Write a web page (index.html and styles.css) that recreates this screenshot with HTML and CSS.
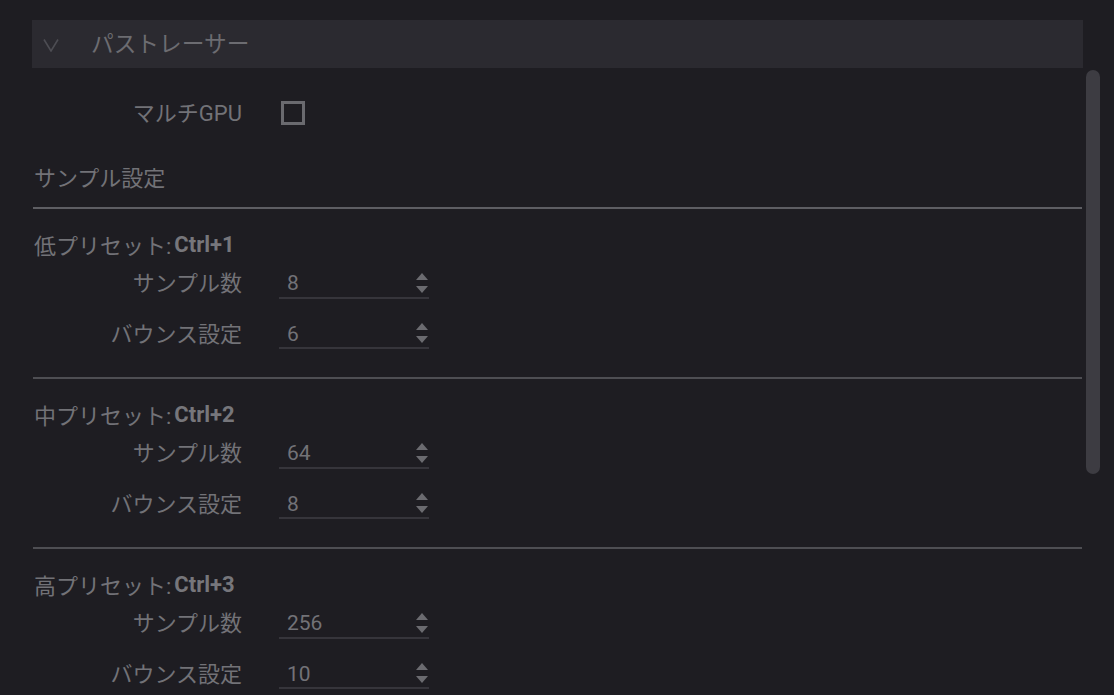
FILE: index.html
```html
<!DOCTYPE html>
<html lang="ja">
<head>
<meta charset="utf-8">
<link rel="stylesheet" href="styles.css">
</head>
<body>
<div class="panel">
  <div class="header">
    <svg class="chevron" width="16" height="14" viewBox="0 0 16 14"><polyline points="1,1.5 8,13 15,1.5" fill="none" stroke="#4d4d53" stroke-width="1.6"/></svg>
    <span class="title">パストレーサー</span>
  </div>
  <div class="content">
    <div class="row">
      <div class="label">マルチGPU</div>
      <div class="checkbox"></div>
    </div>
    <div class="heading">サンプル設定</div>
    <div class="divider"></div>

    <div class="preset">低プリセット:<b>Ctrl+1</b></div>
    <div class="row">
      <div class="label">サンプル数</div>
      <div class="num"><span class="val">8</span><span class="spin"><i class="up"></i><i class="down"></i></span></div>
    </div>
    <div class="row">
      <div class="label">バウンス設定</div>
      <div class="num"><span class="val">6</span><span class="spin"><i class="up"></i><i class="down"></i></span></div>
    </div>
    <div class="divider sec"></div>

    <div class="preset">中プリセット:<b>Ctrl+2</b></div>
    <div class="row">
      <div class="label">サンプル数</div>
      <div class="num"><span class="val">64</span><span class="spin"><i class="up"></i><i class="down"></i></span></div>
    </div>
    <div class="row">
      <div class="label">バウンス設定</div>
      <div class="num"><span class="val">8</span><span class="spin"><i class="up"></i><i class="down"></i></span></div>
    </div>
    <div class="divider sec"></div>

    <div class="preset">高プリセット:<b>Ctrl+3</b></div>
    <div class="row">
      <div class="label">サンプル数</div>
      <div class="num"><span class="val">256</span><span class="spin"><i class="up"></i><i class="down"></i></span></div>
    </div>
    <div class="row">
      <div class="label">バウンス設定</div>
      <div class="num"><span class="val">10</span><span class="spin"><i class="up"></i><i class="down"></i></span></div>
    </div>
    <div class="divider sec"></div>
  </div>
  <div class="scrollbar"></div>
</div>
</body>
</html>
```

FILE: styles.css
```css
html, body {
  margin: 0;
  padding: 0;
  background: #1e1d22;
  overflow: hidden;
  height: 695px;
}
body {
  font-family: Roboto, "Noto Sans CJK JP", sans-serif;
  font-size: 22px;
  color: #727277;
}
.panel {
  position: relative;
  padding: 20px 31px 0 32px;
}
.header {
  height: 48px;
  background: #2b2a30;
  display: flex;
  align-items: center;
}
.chevron {
  margin-left: 11px;
  margin-top: 2px;
}
.title {
  margin-left: 32px;
  color: #6c6c71;
  font-size: 22.7px;
  line-height: 1;
  margin-top: 2px;
}
.content {
  padding: 20px 0 0 2px;
}
.row {
  height: 50.5px;
  display: flex;
  align-items: center;
}
.row:first-child {
  height: 50px;
}
.label {
  width: 208px;
  text-align: right;
  flex: none;
  line-height: 1;
  margin-top: 2px;
}
.checkbox {
  margin-left: 39px;
  width: 18px;
  height: 18px;
  border: 3px solid #6a6a6f;
}
.heading {
  margin-top: 18px;
  height: 40px;
  display: flex;
  align-items: center;
}
.divider {
  margin-top: 11px;
  height: 2px;
  background: #5e5e63;
  margin-right: 1px;
  margin-left: -1px;
}
.divider.sec {
  margin-top: 18px;
  background: #4e4e53;
}
.preset {
  margin-top: 21px;
  height: 28px;
  display: flex;
  align-items: center;
  white-space: pre;
}
.preset b {
  font-weight: 700;
  color: #76767b;
  margin-left: 3px;
}
.num {
  margin-left: 37px;
  width: 150px;
  height: 30px;
  margin-top: 1px;
  border-bottom: 2px solid #36353b;
  display: flex;
  align-items: center;
  justify-content: space-between;
  box-sizing: border-box;
  font-size: 21px;
}
.val {
  margin-left: 8px;
  line-height: 1;
  margin-top: 2px;
}
.spin {
  display: flex;
  flex-direction: column;
  gap: 6px;
  margin-right: 1px;
}
.spin i {
  display: block;
  width: 0;
  height: 0;
  border-left: 6px solid transparent;
  border-right: 6px solid transparent;
}
.spin .up {
  border-bottom: 7px solid #6b6b70;
}
.spin .down {
  border-top: 7px solid #6b6b70;
}
.scrollbar {
  position: absolute;
  left: 1086px;
  top: 70px;
  width: 14px;
  height: 404px;
  border-radius: 7px;
  background: #3d3c42;
}
```
